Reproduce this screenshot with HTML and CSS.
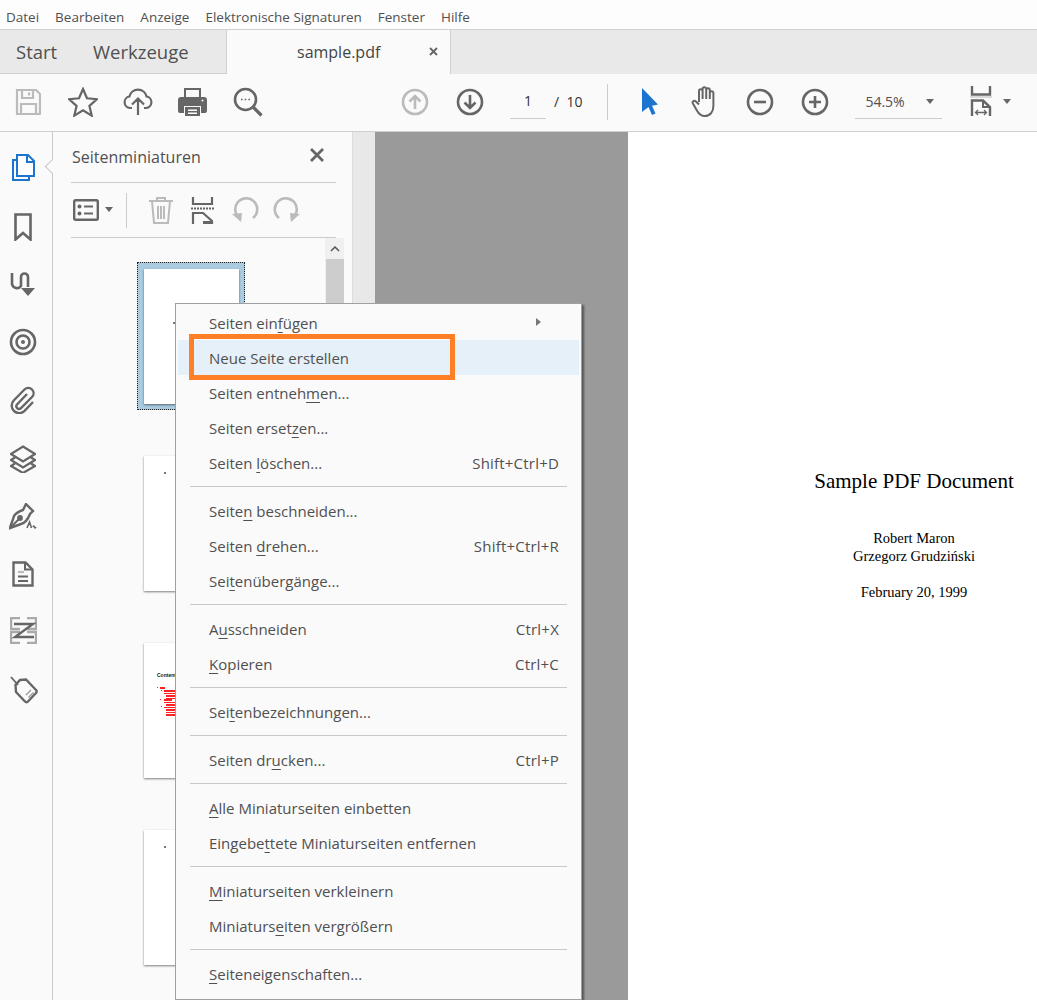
FILE: index.html
```html
<!DOCTYPE html>
<html lang="de">
<head>
  <meta charset="UTF-8">
  <title>sample.pdf</title>
  <link rel="stylesheet" href="styles.css">
</head>
<body>
  <div class="app">
    <div class="menubar">
      <span>Datei</span><span>Bearbeiten</span><span>Anzeige</span><span>Elektronische Signaturen</span><span>Fenster</span><span>Hilfe</span>
    </div>

    <div class="tabbar">
      <div class="tab-start">Start</div>
      <div class="tab-tools">Werkzeuge</div>
      <div class="tab-doc">
        <span class="tab-name">sample.pdf</span>
        <svg class="tab-close" width="9" height="9" viewBox="0 0 9 9"><path d="M1 1l7 7M8 1l-7 7"/></svg>
      </div>
    </div>

    <div class="toolbar">
      <div class="tool-group">
        <div class="tool"><svg class="ico faded" width="26" height="26" viewBox="0 0 26 26"><path d="M2 1h19l4 4v20H2z" stroke-linejoin="round"/><path d="M7 1v8h11V1M14 3.500v3M6 25V15h15v10"/></svg></div>
        <div class="tool"><svg class="ico" width="30" height="30" viewBox="0 0 30 30"><path d="M15 2l4 9.300 10 .9-7.600 6.600 2.300 9.800L15 23.400l-8.700 5.200 2.300-9.800L1 12.200l10-.9z"/></svg></div>
        <div class="tool"><svg class="ico" width="30" height="28" viewBox="0 0 30 28"><path d="M9 20H7a5.800 5.800 0 0 1-.6-11.500 8.800 8.800 0 0 1 17.200 0A5.800 5.800 0 0 1 23 20h-2M15 27V11M9 16.500l6-6 6 6"/></svg></div>
        <div class="tool"><svg width="29" height="28" viewBox="0 0 29 28"><path fill="#666" d="M6 0h17v9H21V2H8v7H6zM3 9h23a3 3 0 0 1 3 3v11a2 2 0 0 1-2 2h-4v-7H6v7H2a2 2 0 0 1-2-2V12a3 3 0 0 1 3-3z"/><path fill="#666" d="M7 19h15v9H7z"/><path fill="#fff" d="M10 21.500h9v1.500h-9zM10 24.500h9v1.500h-9z"/><circle cx="24.500" cy="12.500" r="1" fill="#fff"/></svg></div>
        <div class="tool"><svg class="ico" width="30" height="30" viewBox="0 0 30 30"><circle cx="12.500" cy="12.500" r="10.500" stroke-width="2.600"/><path d="M20.500 20.500l8 8" stroke-width="3.200"/><path d="M8 12.500h1.600M11.700 12.500h1.600M15.400 12.500H17" stroke-width="1.600"/></svg></div>
      </div>

      <div class="nav-group">
        <div class="tool"><svg class="ico faded" width="28" height="28" viewBox="0 0 28 28"><circle cx="14" cy="14" r="12" stroke-width="2.600"/><path d="M14 21V8M8.500 13.500L14 8l5.500 5.500" stroke-width="2.600"/></svg></div>
        <div class="tool"><svg class="ico" width="28" height="28" viewBox="0 0 28 28"><circle cx="14" cy="14" r="12" stroke-width="2.600"/><path d="M14 7v13M8.500 14.500L14 20l5.500-5.500" stroke-width="2.600"/></svg></div>
      </div>

      <div class="page-box">
        <span class="page-input">1</span>
        <span class="page-total">/ &nbsp;10</span>
      </div>
      <div class="tool-sep"></div>

      <div class="view-group">
        <svg class="cursor" width="18" height="27" viewBox="0 0 18 27"><path fill="#1b74d0" d="M1 0l16 16.500-6 1.300 3.500 7.700-3.500 1.500-3.500-8L1 24z"/></svg>
        <svg class="ico hand" width="28" height="31" viewBox="0 0 28 31"><path d="M8 16V5a1.800 1.800 0 0 1 3.600 0v8M11.600 13V3a1.800 1.800 0 0 1 3.600 0v10M15.200 13V4a1.800 1.800 0 0 1 3.600 0v9M18.800 13V7a1.800 1.800 0 0 1 3.600 0v13c0 6-3.500 10-8.500 10-4 0-6-1.800-8-5.500l-4-7c-1-2 1.200-3.500 3-2l3.100 3" stroke-width="2" stroke-linejoin="round"/></svg>
        <svg class="ico zoom-out" width="28" height="28" viewBox="0 0 28 28"><circle cx="14" cy="14" r="12" stroke-width="2.600"/><path d="M8 14h12" stroke-width="2.600"/></svg>
        <svg class="ico zoom-in" width="28" height="28" viewBox="0 0 28 28"><circle cx="14" cy="14" r="12" stroke-width="2.600"/><path d="M8 14h12M14 8v12" stroke-width="2.600"/></svg>
      </div>

      <div class="zoom-box">
        <span>54.5%</span>
        <span class="caret"></span>
      </div>

      <svg class="ico fit" width="22" height="31" viewBox="0 0 22 31"><path d="M2 0v8.500h18V0" stroke-width="2.400"/><path d="M0 11h22" stroke="#ccc" stroke-width="1.500"/><path d="M2 30V14.500h11l7 6.500v9" stroke-width="2.400"/><path d="M13 14.500V21h7" stroke-width="2"/><path d="M5.500 26.500h11M8 24l-2.500 2.500L8 29M14 24l2.500 2.500L14 29" stroke-width="1.300"/></svg>
      <span class="caret fit-caret"></span>
    </div>

    <div class="main">
      <div class="rail">
        <svg class="rail-ico" width="24" height="28" viewBox="0 0 24 28"><path d="M6 6H2v20h16v-4" stroke="#1b74d0" stroke-width="2" fill="none"/><path d="M6 1h11l6 6v15H6z" stroke="#1b74d0" stroke-width="2" fill="#fff"/><path d="M16 1v7h7" stroke="#1b74d0" stroke-width="2" fill="none"/></svg>
        <svg class="rail-ico ico" width="18" height="28" viewBox="0 0 18 28"><path d="M1.500 1.500h15v25L9 20l-7.500 6.500z" stroke-width="2.600"/></svg>
        <svg class="rail-ico ico" width="26" height="26" viewBox="0 0 26 26"><path d="M2 2v11a5 5 0 0 0 9 2V6a3.500 3.500 0 0 1 7 0v10" stroke-width="2.600"/><path d="M11 17h14l-7 8z" fill="#666" stroke="none"/></svg>
        <svg class="rail-ico ico" width="28" height="28" viewBox="0 0 28 28"><circle cx="14" cy="14" r="12" stroke-width="2.600"/><circle cx="14" cy="14" r="6.500" stroke-width="2.600"/><circle cx="14" cy="14" r="2" fill="#666" stroke="none"/></svg>
        <svg class="rail-ico ico" width="26" height="28" viewBox="0 0 26 28"><path d="M17 8L7 18.500a2.700 2.700 0 0 0 3.800 3.800L22 11a5.300 5.300 0 0 0-7.500-7.500L3.700 14.500a7.500 7.500 0 0 0 10.600 10.600L23 16" stroke-width="2.400"/></svg>
        <svg class="rail-ico ico" width="26" height="28" viewBox="0 0 26 28"><path d="M13 1.500L25 9l-12 7.500L1 9z" stroke-width="2.200"/><path d="M5 12.500L1 15l12 7.500L25 15l-4-2.500" stroke-width="2.200"/><path d="M5 18.500L1 21l12 7 12-7-4-2.500" stroke-width="2.200"/></svg>
        <svg class="rail-ico ico" width="29" height="27" viewBox="0 0 29 27"><path d="M17 1l7 7-3 3c-2 5-5 9-9 10L1 25c1-4 3-8 4-12 2-3 6-5 9-6z" stroke-width="2.400"/><path d="M2 24l8-8" stroke-width="2"/><circle cx="11" cy="15" r="1.800" fill="#666"/><path d="M18 25l2.500-6 2 6M24 24q1-2 1.500 0t1.500 0" stroke-width="1.600"/></svg>
        <svg class="rail-ico ico" width="22" height="26" viewBox="0 0 22 26"><path d="M1.500 1.500h12l7 7v16h-19z" stroke-width="2.400"/><path d="M13 1.500v7h7" stroke-width="2"/><path d="M6 11h6" stroke="#bbb" stroke-width="2.200"/><path d="M6 15.500h10M6 20h10" stroke-width="2.200"/></svg>
        <svg class="rail-ico ico" width="27" height="27" viewBox="0 0 27 27"><path d="M10 1H1v11h9M17 1h9v11h-9M10 26H1V15h9M17 26h9V15h-9" stroke="#aaa" stroke-width="2.400"/><path d="M4 7h19L5 20h19" stroke-width="2.400"/></svg>
        <svg class="rail-ico ico" width="30" height="29" viewBox="0 0 30 29"><path d="M12 5l6-.5L28 15a2 2 0 0 1 0 3l-8 8.500a2 2 0 0 1-3 0L8 17l-.5-7z" stroke-width="2.400"/><path d="M10 10L3 2" stroke-width="1.800"/><path d="M18 20l5-5M20.500 22.500l5-5" stroke="#999" stroke-width="1.400"/></svg>
      </div>

      <div class="panel">
        <div class="panel-pointer"></div>
        <div class="panel-head">
          <span class="panel-title">Seitenminiaturen</span>
          <svg class="panel-close" width="16" height="16" viewBox="0 0 16 16"><path d="M2 2l12 12M14 2L2 14"/></svg>
        </div>
        <div class="panel-tools">
          <svg class="ico" width="26" height="22" viewBox="0 0 26 22"><rect x="1.200" y="1.200" width="23.600" height="19.600" rx="1.500" stroke-width="2.400"/><circle cx="6.500" cy="7.500" r="2" fill="#666" stroke="none"/><circle cx="6.500" cy="14.500" r="2" fill="#666" stroke="none"/><path d="M11 7.500h9M11 14.500h9" stroke-width="2"/></svg>
          <span class="caret small-caret"></span>
          <div class="panel-sep"></div>
          <svg class="ico faded trash" width="26" height="28" viewBox="0 0 26 28"><path d="M1 5h24M9 5V2h8v3M4 5l2 22h14l2-22M10 10v13M13 10v13M16 10v13" stroke-width="2"/></svg>
          <svg class="ico split" width="23" height="27" viewBox="0 0 23 27"><path d="M2 0v7h19V0" stroke-width="2.200"/><path d="M0 11.500h23" stroke-width="2" stroke-dasharray="2 1"/><path d="M2 27V16h10l9 8v3" stroke-width="2.200"/><path d="M12 16v8h9v3h-9z" fill="#666" stroke="none"/></svg>
          <svg class="ico faded undo" width="28" height="26" viewBox="0 0 28 26"><path d="M10 22A11 11 0 1 1 22 21" stroke-width="2.600"/><path d="M1 17l10-1-1 9z" fill="#bbb" stroke="none"/></svg>
          <svg class="ico faded redo" width="28" height="26" viewBox="0 0 28 26"><path d="M18 22A11 11 0 1 0 6 21" stroke-width="2.600"/><path d="M27 17l-10-1 1 9z" fill="#bbb" stroke="none"/></svg>
        </div>
        <div class="thumb-area">
          <div class="thumb-list">
            <div class="thumb-selected">
              <div class="thumb"><i class="thumb-dot dot-first"></i></div>
            </div>
            <div class="thumb thumb-next"><i class="thumb-dot"></i></div>
            <div class="thumb thumb-next">
              <span class="thumb-heading">Contents</span>
              <svg class="thumb-toc" width="19" height="30" viewBox="0 0 19 30"><path fill="#f22" d="M0 0h1v1H0zM3 0h5v2H3zM4 3h1v1H4zM7 3h12v2H7zM7 6h12v1H7zM9 8h10v2H9zM9 11h10v1H9zM3 12h1v1H3zM7 12h8v2H7zM7 15h12v1H7zM9 17h10v2H9zM4 19h1v1H4zM7 20h12v1H7zM9 22h10v2H9zM9 25h10v1H9zM9 27h10v2H9z"/></svg>
            </div>
            <div class="thumb thumb-next"><i class="thumb-dot"></i></div>
          </div>
          <div class="thumb-scroll">
            <div class="scroll-up"><svg width="10" height="6" viewBox="0 0 10 6"><path d="M1 5l4-4 4 4"/></svg></div>
            <div class="scroll-thumb"></div>
          </div>
        </div>
      </div>

      <div class="strip"></div>

      <div class="viewer">
        <div class="pdf-page">
          <h1 class="pdf-title">Sample PDF Document</h1>
          <p class="pdf-author">Robert Maron</p>
          <p class="pdf-author">Grzegorz Grudziński</p>
          <p class="pdf-date">February 20, 1999</p>
        </div>
      </div>
    </div>

    <div class="context-menu">
      <div class="menu-row"><span>Seiten ein<u>f</u>ügen</span><i class="menu-arrow"></i></div>
      <div class="menu-row active"><span>Neue Seite erstellen</span><div class="callout"></div></div>
      <div class="menu-row"><span>Seiten entneh<u>m</u>en...</span></div>
      <div class="menu-row"><span>Seiten erset<u>z</u>en...</span></div>
      <div class="menu-row"><span>Seiten <u>l</u>öschen...</span><span class="keys">Shift+Ctrl+D</span></div>
      <div class="menu-sep"></div>
      <div class="menu-row"><span>Seite<u>n</u> beschneiden...</span></div>
      <div class="menu-row"><span>Seiten <u>d</u>rehen...</span><span class="keys">Shift+Ctrl+R</span></div>
      <div class="menu-row"><span>Sei<u>t</u>enübergänge...</span></div>
      <div class="menu-sep"></div>
      <div class="menu-row"><span>A<u>u</u>sschneiden</span><span class="keys">Ctrl+X</span></div>
      <div class="menu-row"><span><u>K</u>opieren</span><span class="keys">Ctrl+C</span></div>
      <div class="menu-sep"></div>
      <div class="menu-row"><span>Sei<u>t</u>enbezeichnungen...</span></div>
      <div class="menu-sep"></div>
      <div class="menu-row"><span>Seiten dr<u>u</u>cken...</span><span class="keys">Ctrl+P</span></div>
      <div class="menu-sep"></div>
      <div class="menu-row"><span><u>A</u>lle Miniaturseiten einbetten</span></div>
      <div class="menu-row"><span>Eingebe<u>t</u>tete Miniaturseiten entfernen</span></div>
      <div class="menu-sep"></div>
      <div class="menu-row"><span><u>M</u>iniaturseiten verkleinern</span></div>
      <div class="menu-row"><span>Miniaturs<u>e</u>iten vergrößern</span></div>
      <div class="menu-sep"></div>
      <div class="menu-row"><span><u>S</u>eiteneigenschaften...</span></div>
    </div>
  </div>
</body>
</html>
```

FILE: styles.css
```css
* {
  box-sizing: border-box;
}
html, body {
  margin: 0;
  height: 1000px;
  overflow: hidden;
}
body {
  background: #fff;
  color: #505050;
  font-family: "Open Sans", "Noto Sans", sans-serif;
}
.app {
  position: relative;
  height: 1000px;
  overflow: hidden;
  display: flex;
  flex-direction: column;
}
svg {
  display: block;
  flex: none;
}
.ico {
  fill: none;
  stroke: #666;
  stroke-width: 2.200;
}
.faded {
  stroke: #bbb;
}

/* top rows */
.menubar {
  height: 30px;
  padding: 4px 0 0 6px;
  display: flex;
  gap: 16px;
  align-items: center;
  font-size: 13.500px;
  background: #fdfdfd;
  border-bottom: 1px solid #d0d0d0;
}
.tabbar {
  height: 44px;
  display: flex;
  background: #e9e9e9;
  font-size: 18.500px;
}
.tab-start {
  width: 93px;
  padding-left: 16px;
  line-height: 43px;
  border-bottom: 1px solid #d0d0d0;
}
.tab-tools {
  width: 133px;
  line-height: 43px;
  border-bottom: 1px solid #d0d0d0;
}
.tab-doc {
  width: 225px;
  display: flex;
  align-items: center;
  padding-left: 70px;
  background: #fafafa;
  border-left: 1px solid #d0d0d0;
  border-right: 1px solid #d0d0d0;
  font-size: 16px;
  color: #444;
}
.tab-close {
  margin-left: 49px;
  margin-top: -2px;
  fill: none;
  stroke: #666;
  stroke-width: 1.800;
}
.toolbar {
  height: 58px;
  display: flex;
  align-items: center;
  background: #fafafa;
  border-bottom: 1px solid #d0d0d0;
  padding-bottom: 2px;
}
.tool-group, .nav-group, .view-group {
  display: flex;
  align-items: center;
}
.tool {
  width: 55px;
  display: flex;
  justify-content: center;
}
.nav-group {
  margin-left: 112px;
}
.page-box {
  margin-left: 13px;
  display: flex;
  align-items: center;
  font-size: 14px;
  color: #333;
}
.page-input {
  width: 36px;
  height: 34px;
  line-height: 32px;
  margin-top: 1px;
  text-align: center;
  border-bottom: 1px solid #ccc;
}
.page-total {
  margin-left: 8px;
}
.tool-sep {
  width: 1px;
  height: 36px;
  margin-left: 25px;
  background: #ccc;
}
.cursor {
  margin-left: 33px;
}
.hand {
  margin-left: 32px;
  stroke-width: 2;
}
.zoom-out {
  margin-left: 27px;
}
.zoom-in {
  margin-left: 27px;
}
.zoom-box {
  width: 87px;
  height: 34px;
  margin-left: 26px;
  margin-top: 1px;
  padding-left: 10px;
  display: flex;
  align-items: center;
  font-size: 14px;
  border-bottom: 1px solid #ccc;
}
.caret {
  width: 0;
  height: 0;
  border-left: 4px solid transparent;
  border-right: 4px solid transparent;
  border-top: 5px solid #666;
}
.zoom-box .caret {
  margin-left: 21px;
}
.fit {
  margin-left: 28px;
}
.fit-caret {
  margin-left: 11px;
  margin-top: -1px;
}

/* body of the window */
.main {
  flex: 1;
  display: flex;
  min-height: 0;
}
.rail {
  width: 53px;
  flex: none;
  display: flex;
  flex-direction: column;
  align-items: center;
  background: #fafafa;
  border-right: 1px solid #c8c8c8;
  padding: 22px 6px 0 0;
  gap: 30.500px;
}
.panel {
  position: relative;
  width: 300px;
  flex: none;
  background: #fafafa;
  border-right: 1px solid #dcdcdc;
}
.panel-pointer {
  position: absolute;
  left: -6px;
  top: 29px;
  width: 11px;
  height: 11px;
  background: #fafafa;
  border-left: 1px solid #c8c8c8;
  border-bottom: 1px solid #c8c8c8;
  transform: rotate(45deg);
}
.panel-head {
  height: 51px;
  margin: 0 16px 0 18px;
  padding-left: 1px;
  display: flex;
  align-items: center;
  justify-content: space-between;
  border-bottom: 1px solid #ccc;
  font-size: 16px;
}
.panel-close {
  margin-right: 11px;
  margin-top: -4px;
  fill: none;
  stroke: #666;
  stroke-width: 2.800;
}
.panel-tools {
  height: 55px;
  margin: 0 16px 0 18px;
  padding: 0 0 0 2px;
  display: flex;
  align-items: center;
  border-bottom: 1px solid #ccc;
}
.small-caret {
  margin-left: 6px;
  margin-top: -2px;
}
.panel-sep {
  width: 1px;
  height: 35px;
  margin-left: 13px;
  background: #ccc;
}
.trash {
  margin-left: 21px;
}
.split {
  margin-left: 17px;
}
.undo {
  margin-left: 17px;
}
.redo {
  margin-left: 14px;
}
.thumb-area {
  display: flex;
}
.thumb-list {
  width: 272px;
  padding: 24px 0 0 84px;
}
.thumb-selected {
  width: 108px;
  height: 148px;
  padding: 6px;
  background: #a9cce0;
  border: 1px dotted #222;
}
.thumb {
  position: relative;
  width: 95px;
  height: 135px;
  background: #fff;
  box-shadow: 0 1px 2px rgba(0, 0, 0, 0.5);
}
.thumb-next {
  margin: 46px 0 0 7px;
}
.thumb-next + .thumb-next {
  margin-top: 52px;
}
.thumb-dot {
  position: absolute;
  left: 20px;
  top: 16px;
  width: 2px;
  height: 2px;
  background: #777;
}
.dot-first {
  left: 29px;
  top: 53px;
}
.thumb-heading {
  position: absolute;
  left: 13px;
  top: 29px;
  font: bold 5px "Liberation Sans", sans-serif;
  color: #111;
}
.thumb-toc {
  position: absolute;
  left: 13px;
  top: 44px;
}
.thumb-scroll {
  width: 19px;
  height: 760px;
  background: #f0f0f0;
}
.scroll-up {
  height: 21px;
  display: flex;
  align-items: center;
  justify-content: center;
  fill: none;
  stroke: #555;
  stroke-width: 1.500;
}
.scroll-thumb {
  height: 200px;
  margin-left: 1px;
  background: #cdcdcd;
}
.strip {
  width: 22px;
  flex: none;
  background: #e8e8e8;
}
.viewer {
  flex: 1;
  min-width: 0;
  padding-left: 253px;
  background: #9a9a9a;
  overflow: hidden;
}
.pdf-page {
  width: 572px;
  height: 100%;
  padding-top: 337px;
  background: #fff;
  color: #000;
  text-align: center;
  font-family: "Liberation Serif", serif;
  font-size: 14.500px;
  line-height: 18px;
}
.pdf-title {
  margin: 0 0 36px;
  font-size: 21px;
  font-weight: normal;
  line-height: 24px;
}
.pdf-author {
  margin: 0;
}
.pdf-date {
  margin: 18px 0 0;
}

/* context menu, lies over the panel */
.context-menu {
  position: absolute;
  left: 175px;
  top: 303px;
  width: 407px;
  height: 697px;
  padding: 1px 2px 8px;
  background: #fafafa;
  border: 1px solid #a0a0a0;
  box-shadow: 2px 2px 2px rgba(0, 0, 0, 0.45);
  font-size: 15px;
}
.menu-row {
  position: relative;
  height: 35px;
  display: flex;
  align-items: center;
  justify-content: space-between;
  padding: 0 20px 0 31px;
}
.menu-row.active {
  background: #e5f0f9;
}
.menu-row u {
  text-underline-offset: 3px;
}
.keys {
  letter-spacing: 0.200px;
}
.menu-arrow {
  width: 0;
  height: 0;
  margin-right: 18px;
  margin-top: -2px;
  border-top: 4px solid transparent;
  border-bottom: 4px solid transparent;
  border-left: 5px solid #777;
}
.menu-sep {
  height: 1px;
  margin: 6px 12px;
  background: #c8c8c8;
}
.callout {
  position: absolute;
  left: 11px;
  top: -6px;
  width: 266px;
  height: 46px;
  border: 5px solid #ff7f27;
}
```
